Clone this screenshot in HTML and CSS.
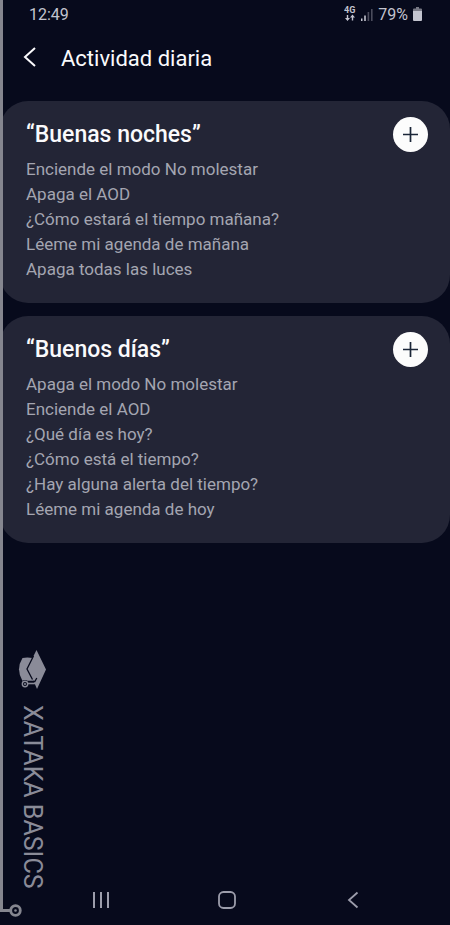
FILE: index.html
```html
<!DOCTYPE html>
<html lang="es">
<head>
<meta charset="utf-8">
<meta name="viewport" content="width=device-width, initial-scale=1">
<title>Actividad diaria</title>
<link rel="stylesheet" href="styles.css">
</head>
<body>
<div class="screen">
  <div class="status">
    <span>12:49</span>
    <div class="status-icons">
      <svg class="network" width="12" height="16" viewBox="0 0 12 16" aria-label="4G">
        <text class="network-label" x="0" y="7">4G</text>
        <path d="M3.5 9v4.500M8.500 14.500V10" stroke="currentColor" stroke-width="1.400"/>
        <path d="M1 12h5l-2.500 3zM6 11.500h5l-2.500-3z" fill="currentColor"/>
      </svg>
      <svg width="12" height="13" viewBox="0 0 12 13" aria-hidden="true">
        <path d="M0 10.500h1.500V13H0zM3.200 7.500h1.600V13H3.200z" fill="currentColor"/>
        <path d="M6.600 4h1.600v9H6.600zM10 1h1.600v12H10z" fill="#4b4c5c"/>
      </svg>
      <span class="percent">79%</span>
      <svg width="9" height="14" viewBox="0 0 9 14" aria-hidden="true">
        <path d="M3 0h3v1.500h2q1 0 1 1V4H0V2.500q0-1 1-1h2z" fill="#777884"/>
        <path d="M0 4h9v9q0 1-1 1H1q-1 0-1-1z" fill="currentColor"/>
      </svg>
    </div>
  </div>

  <header class="header">
    <button class="back" type="button" aria-label="Atrás">
      <svg width="14" height="22" viewBox="0 0 14 22" fill="none" stroke="currentColor" stroke-width="2"><path d="M12 1L2 10l10 9"/></svg>
    </button>
    <h1>Actividad diaria</h1>
  </header>

  <main class="cards">
    <section class="card">
      <div class="card-head">
        <h2>“Buenas noches”</h2>
        <button class="add" type="button" aria-label="Añadir Buenas noches">
          <svg width="15" height="15" viewBox="0 0 15 15" stroke="currentColor" stroke-width="1.700"><path d="M7.500 0v15M0 7.500h15"/></svg>
        </button>
      </div>
      <ul>
        <li>Enciende el modo No molestar</li>
        <li>Apaga el AOD</li>
        <li>¿Cómo estará el tiempo mañana?</li>
        <li>Léeme mi agenda de mañana</li>
        <li>Apaga todas las luces</li>
      </ul>
    </section>
    <section class="card">
      <div class="card-head">
        <h2>“Buenos días”</h2>
        <button class="add" type="button" aria-label="Añadir Buenos días">
          <svg width="15" height="15" viewBox="0 0 15 15" stroke="currentColor" stroke-width="1.700"><path d="M7.500 0v15M0 7.500h15"/></svg>
        </button>
      </div>
      <ul>
        <li>Apaga el modo No molestar</li>
        <li>Enciende el AOD</li>
        <li>¿Qué día es hoy?</li>
        <li>¿Cómo está el tiempo?</li>
        <li>¿Hay alguna alerta del tiempo?</li>
        <li>Léeme mi agenda de hoy</li>
      </ul>
    </section>
  </main>

  <nav class="nav">
    <button type="button" aria-label="Recientes">
      <svg width="18" height="18" viewBox="0 0 18 18" stroke="currentColor" stroke-width="2"><path d="M2 1v16M9 1v16M16 1v16"/></svg>
    </button>
    <button type="button" aria-label="Inicio">
      <svg width="18" height="18" viewBox="0 0 18 18" fill="none" stroke="currentColor" stroke-width="1.800"><rect x="1" y="1" width="16" height="16" rx="4.500"/></svg>
    </button>
    <button type="button" aria-label="Volver">
      <svg width="18" height="18" viewBox="0 0 18 18" fill="none" stroke="currentColor" stroke-width="1.800"><path d="M13.500 1.500L5 9l8.500 7.500"/></svg>
    </button>
  </nav>

  <div class="watermark">
    <svg class="cap" width="28" height="39" viewBox="0 0 28 39" aria-hidden="true">
      <path d="M4.500 8Q9 7 15 8v23H4.500Q-2.500 19 4.500 8z" fill="currentColor"/>
      <path d="M18.500 0L28 19.500 19 39l-3-7L9 19z" fill="currentColor"/>
      <path d="M15.500 6L9 19l5.500 10.500M18.800 28l-2 3.500H10" fill="none" stroke="#070a1c" stroke-width="1.300"/>
      <path d="M9 35.500h7.500" stroke="#070a1c" stroke-width="1.300"/>
      <circle cx="7" cy="34" r="4" fill="#070a1c"/>
      <circle cx="7" cy="34" r="2.700" fill="none" stroke="currentColor" stroke-width="1.400"/>
      <circle cx="7" cy="34" r="1" fill="currentColor"/>
      <path d="M9.700 33.500H17" stroke="currentColor" stroke-width="1.600"/>
    </svg>
    <span>XATAKA BASICS</span>
  </div>
  <div class="rail" aria-hidden="true"></div>
  <svg class="rail-end" width="23" height="15" viewBox="0 0 23 15" fill="none" stroke="currentColor" aria-hidden="true">
    <path d="M1.500 0v7.500H10" stroke-width="3"/>
    <circle cx="15.500" cy="7.500" r="4.800" stroke-width="2.800"/>
    <circle cx="15.500" cy="7.500" r="1.300" fill="currentColor" stroke="none"/>
  </svg>
</div>
</body>
</html>
```
FILE: styles.css
```css
* { box-sizing: border-box; }

body {
  margin: 0;
  background: #070a1c;
  color: #fafafc;
  font-family: Roboto, "Liberation Sans", sans-serif;
}

h1, h2, ul { margin: 0; padding: 0; }

button {
  display: flex;
  align-items: center;
  justify-content: center;
  padding: 0;
  border: 0;
  background: none;
  color: inherit;
}

svg { display: block; flex: none; }

.screen {
  position: relative;
  display: flex;
  flex-direction: column;
  min-height: 100vh;
}

.status {
  display: flex;
  align-items: center;
  justify-content: space-between;
  height: 28px;
  padding: 0 28px 0 29px;
  color: #c3c4cf;
  font-size: 16px;
}

.status-icons { display: flex; align-items: center; gap: 5px; }
.network-label { font-size: 9px; font-weight: 700; fill: currentColor; }

.header {
  display: flex;
  align-items: center;
  gap: 24px;
  height: 60px;
  padding-left: 22px;
}

.header h1 { font-size: 22px; font-weight: 400; }
.back { width: 15px; height: 30px; }

.cards {
  display: flex;
  flex: 1;
  flex-direction: column;
  gap: 13px;
  padding-top: 13px;
}

.card {
  padding: 16px 22px 21px 26px;
  border-radius: 28px;
  background: #232536;
}

.card-head {
  display: flex;
  align-items: center;
  justify-content: space-between;
  margin-bottom: 5px;
}

.card h2 { font-size: 23px; font-weight: 500; }

.add {
  width: 35px;
  height: 35px;
  border-radius: 50%;
  background: #fcfcfc;
  color: #1b2638;
}

.card ul {
  list-style: none;
  color: #a4a5b1;
  font-size: 17px;
  line-height: 25px;
}

.nav {
  display: flex;
  justify-content: space-between;
  padding: 0 88px 16px 92px;
  color: #9c9dab;
}

.watermark {
  position: absolute;
  bottom: 36px;
  left: 18px;
  display: flex;
  flex-direction: column;
  gap: 16px;
  color: #8a8b98;
}

.watermark span {
  font-size: 25px;
  font-kerning: normal;
  line-height: 28px;
  writing-mode: vertical-rl;
}

.rail {
  position: absolute;
  top: 0;
  bottom: 22px;
  left: 0;
  width: 3px;
  background: #85868f;
}

.rail-end {
  position: absolute;
  bottom: 7px;
  left: 0;
  color: #85868f;
}
```
